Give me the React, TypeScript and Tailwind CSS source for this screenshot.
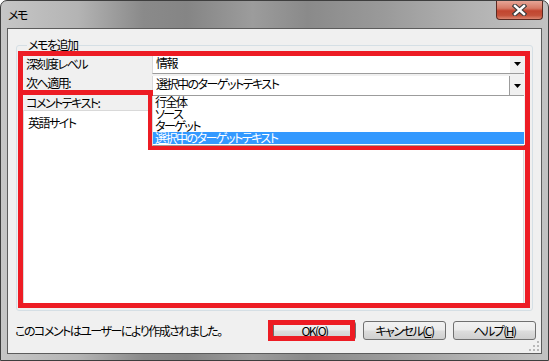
import type { ReactNode } from 'react'

const jp = "font-['Noto_Sans_CJK_JP','Noto_Sans',sans-serif] [font-feature-settings:'palt'] tracking-[-1.5px]"

const listItems = ['行全体', 'ソース', 'ターゲット', '選択中のターゲットテキスト']

function Arrow() {
  return (
    <svg width="7" height="4" viewBox="0 0 7 4">
      <path d="M0 0h7L3.5 4z" fill="#000" />
    </svg>
  )
}

function Combo({ value, divider, children }: { value: string; divider?: boolean; children?: ReactNode }) {
  return (
    <div className="relative flex flex-1 border-b border-l border-b-[#9c9c9c] border-l-[#d9d9d9] bg-white">
      <span className="flex-1 pl-[3px] pt-[2px]">{value}</span>
      <span
        className={
          divider
            ? 'flex w-[15px] items-center justify-center border-l border-[#9c9c9c] bg-[#f0f0f0]'
            : 'flex w-[14px] items-center justify-center bg-[#f0f0f0]'
        }
      >
        <Arrow />
      </span>
      {children}
    </div>
  )
}

function Button({ label, mnemonic }: { label: string; mnemonic: string }) {
  return (
    <button
      type="button"
      className="flex h-[19px] w-[83px] items-center justify-center rounded-[3px] border border-[#707070] bg-[linear-gradient(180deg,#f2f2f2_0%,#ebebeb_48%,#dddddd_52%,#cfcfcf_100%)] leading-[12px]"
    >
      {label}(<span className="underline underline-offset-1">{mnemonic}</span>)
    </button>
  )
}

function CloseButton() {
  return (
    <div className="mr-[5px] flex h-[19px] w-[47px] items-center justify-center rounded-b-[4px] border border-t-0 border-[#5b2a22] bg-[linear-gradient(180deg,#e6a596_0%,#d67a66_40%,#c2452f_55%,#c4513a_80%,#dc8670_100%)]">
      <svg width="15" height="12" viewBox="0 0 15 12">
        <path d="M3 2l9 8M12 2l-9 8" stroke="#3b3b3b" strokeWidth="4.6" strokeLinecap="square" />
        <path d="M3 2l9 8M12 2l-9 8" stroke="#fff" strokeWidth="2.4" strokeLinecap="square" />
      </svg>
    </div>
  )
}

function Grip() {
  const dots = [
    [8, 0],
    [4, 4],
    [8, 4],
    [0, 8],
    [4, 8],
    [8, 8],
  ]
  return (
    <svg width="10" height="10" viewBox="0 0 10 10" className="absolute bottom-[2px] right-[2px]">
      {dots.map(([x, y]) => (
        <rect key={`${x}-${y}`} x={x} y={y} width="2" height="2" fill="#b8b8b8" />
      ))}
    </svg>
  )
}

export default function App() {
  return (
    <div className={`relative h-[361px] w-[549px] overflow-hidden bg-white text-[12px] leading-[12px] text-black ${jp}`}>
      <div className="flex h-full flex-col rounded-t-[7px] border border-[#3e3e3e] bg-[linear-gradient(90deg,#c6c6c6_0%,#b4b4b4_14%,#8a8a8a_26%,#858585_34%,#9c9c9c_46%,#8a8a8a_56%,#9a9a9a_70%,#b2b2b2_86%,#c2c2c2_100%)]">
        {/* title bar */}
        <div className="flex h-[27px] items-start justify-between">
          <span className="ml-[7px] mt-[8px]">メモ</span>
          <CloseButton />
        </div>

        {/* client area */}
        <div className="relative mx-[6px] mb-[6px] flex flex-1 flex-col border border-[#5c5c5c] bg-[#f0f0f0]">
          <fieldset className="mx-[8px] mt-[9px] flex flex-1 flex-col rounded-[3px] border border-[#d5dfe5] px-[6px] pb-[3px] pr-[8px]">
            <legend className="ml-[4px] px-[1px] leading-[14px]">メモを追加</legend>

            <div className="mt-[3px] flex h-[19px]">
              <span className="w-[129px] pl-[3px] pt-[3px]">深刻度レベル</span>
              <Combo value="情報" />
            </div>

            <div className="mt-[2px] flex h-[20px]">
              <span className="w-[129px] pl-[3px] pt-[1px]">次へ適用:</span>
              <Combo value="選択中のターゲットテキスト" divider>
                <div className="absolute left-[-1px] right-0 top-[20px] z-10 border-b border-l border-b-[#9c9c9c] border-l-[#d9d9d9] bg-white pb-[1px]">
                  {listItems.map((item, i) => (
                    <div
                      key={item}
                      className={i === listItems.length - 1 ? 'h-[12px] bg-[#3399ff] pl-[2px] text-white' : 'h-[12px] pl-[2px]'}
                    >
                      {item}
                    </div>
                  ))}
                </div>
              </Combo>
            </div>

            <span className="h-[14px] pl-[3px] pt-[1px]">コメントテキスト:</span>

            <div className="flex-1 border border-[#d9d9d9] bg-white px-[4px] pt-[6px]">英語サイト</div>
          </fieldset>

          <div className="flex h-[42px] items-center justify-between pb-[3px] pl-[7px] pr-[5px]">
            <span>このコメントはユーザーにより作成されました。</span>
            <div className="flex gap-[7px]">
              <Button label="OK" mnemonic="O" />
              <Button label="キャンセル" mnemonic="C" />
              <Button label="ヘルプ" mnemonic="H" />
            </div>
          </div>

          <Grip />
        </div>
      </div>

      {/* red annotation marks */}
      <div className="absolute left-[18px] top-[51px] h-[5px] w-[512px] bg-[#ed1c24]" />
      <div className="absolute left-[18px] top-[51px] h-[257px] w-[5px] bg-[#ed1c24]" />
      <div className="absolute left-[525px] top-[51px] h-[257px] w-[5px] bg-[#ed1c24]" />
      <div className="absolute left-[18px] top-[303px] h-[5px] w-[512px] bg-[#ed1c24]" />
      <div className="absolute left-[18px] top-[90px] h-[5px] w-[135px] bg-[#ed1c24]" />
      <div className="absolute left-[148px] top-[90px] h-[60px] w-[5px] bg-[#ed1c24]" />
      <div className="absolute left-[148px] top-[145px] h-[5px] w-[382px] bg-[#ed1c24]" />
      <div className="absolute left-[268px] top-[320px] h-[21px] w-[87px] border-[5px] border-[#ed1c24]" />
    </div>
  )
}
